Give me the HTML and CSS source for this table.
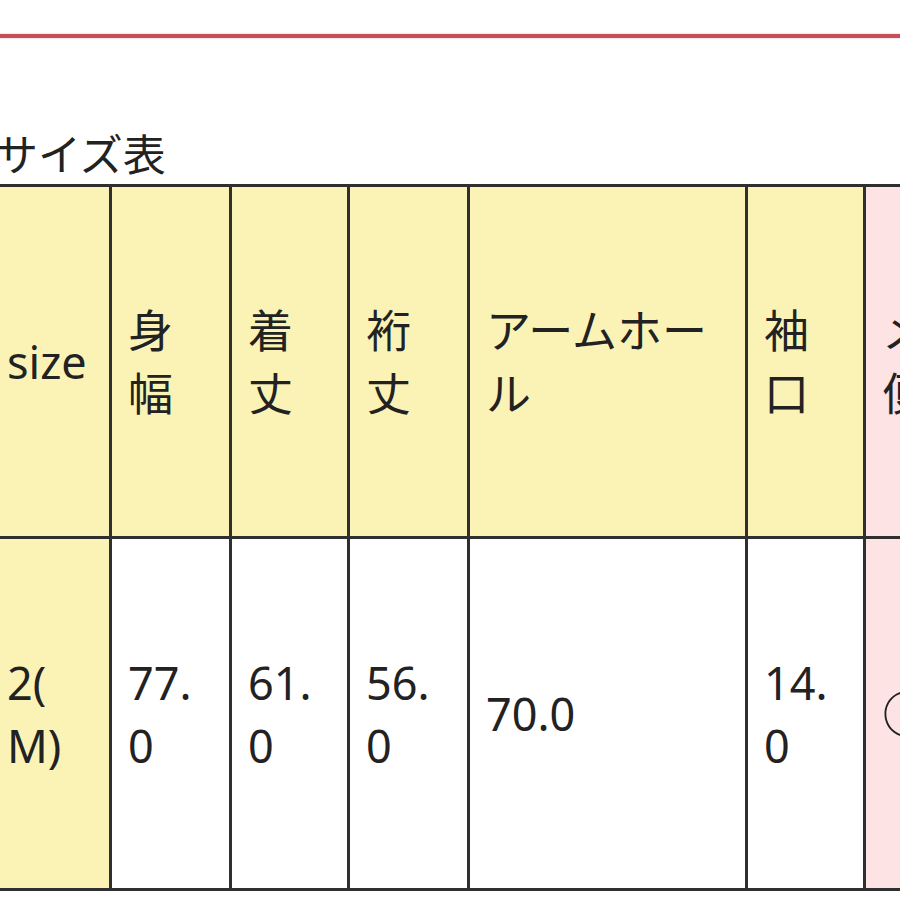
FILE: index.html
```html
<!DOCTYPE html>
<html lang="ja">
<head>
<meta charset="utf-8">
<title>サイズ表</title>
<link rel="stylesheet" href="styles.css">
</head>
<body>
<div class="page">
  <div class="rule"></div>
  <h2 class="title">サイズ表</h2>
  <table class="size-table">
    <colgroup>
      <col class="c-size">
      <col class="c-n">
      <col class="c-n2">
      <col class="c-n">
      <col class="c-wide">
      <col class="c-n2">
      <col class="c-last">
    </colgroup>
    <tr class="head">
      <th class="key">size</th>
      <th>身<br>幅</th>
      <th>着<br>丈</th>
      <th>裄<br>丈</th>
      <th>アームホー<br>ル</th>
      <th>袖<br>口</th>
      <th class="pink">メール<br>便</th>
    </tr>
    <tr class="data">
      <td class="key">2(<br>M)</td>
      <td>77.<br>0</td>
      <td>61.<br>0</td>
      <td>56.<br>0</td>
      <td>70.0</td>
      <td>14.<br>0</td>
      <td class="pink"><span class="mark">○</span></td>
    </tr>
  </table>
</div>
</body>
</html>
```

FILE: styles.css
```css
html, body {
  margin: 0;
  padding: 0;
  background: #ffffff;
  overflow: hidden;
}

.page {
  width: 900px;
  height: 900px;
  overflow: hidden;
  font-family: "Noto Sans", "Noto Sans CJK JP", sans-serif;
  color: #222222;
}

.rule {
  margin-top: 34px;
  height: 4px;
  background: #c54e58;
  box-shadow: 0 0 2px rgba(220, 110, 120, 0.6);
}

.title {
  margin: 86px 0 0 -5px;
  font-family: "Noto Sans CJK JP", sans-serif;
  font-weight: 400;
  font-size: 43px;
  line-height: 56px;
  height: 60px;
  letter-spacing: 0;
}

.size-table {
  margin-left: -12px;
  border-collapse: collapse;
  table-layout: fixed;
  width: 1030px;
}

.c-size { width: 121px; }
.c-n { width: 120px; }
.c-n2 { width: 118px; }
.c-wide { width: 278px; }
.c-last { width: 156px; }

.size-table th,
.size-table td {
  border: 3px solid #2f2f2f;
  padding: 0 14px 0 16px;
  text-align: left;
  vertical-align: middle;
  font-weight: 400;
  font-size: 45px;
  line-height: 63px;
  white-space: nowrap;
  overflow: hidden;
}

.head th {
  height: 349px;
  background: #fbf3b6;
}

.data td {
  height: 349px;
  background: #ffffff;
}

.data td.key {
  background: #fbf3b6;
}

.size-table .pink {
  background: #fde3e3;
}

.mark {
  font-family: "Noto Sans CJK JP", sans-serif;
  font-size: 50px;
}
```
